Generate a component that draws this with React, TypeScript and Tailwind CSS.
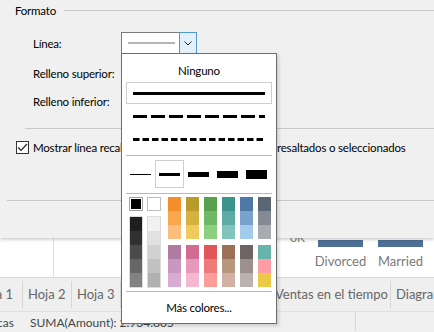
const topColors = [
  ["#f28e2b", "#f9a64e", "#fdbd7c"],
  ["#b89b2b", "#d6b13f", "#efcb5c"],
  ["#59a14f", "#6fb867", "#8ccf7e"],
  ["#3b948c", "#5caca5", "#80c4bd"],
  ["#4e79a7", "#78a2cd", "#a1caed"],
  ["#5b6675", "#838a93", "#a8acb0"],
];

const bottomColors = [
  ["#b07aa1", "#c997bf", "#d9aad3"],
  ["#d16b93", "#e699ba", "#f6b8d0"],
  ["#e15759", "#ef7a79", "#fe9c9a"],
  ["#9c7157", "#b9977f", "#d4b0a2"],
  ["#6f6462", "#9c8f8c", "#bbb1ae"],
  ["#69b3ad", "#ff9da7", "#edc948"],
];

const grays = ["#1f1f1f", "#303030", "#4b4b4b", "#666666", "#828282"];
const lights = ["#f1f1f1", "#e1e1e1", "#d1d1d1", "#c1c1c1", "#b1b1b1"];

const ColorColumn = ({ colors }: { colors: string[] }) => (
  <div className="flex w-[13px] flex-col">
    {colors.map((c) => (
      <div key={c} className="h-[14px] w-full" style={{ backgroundColor: c }} />
    ))}
  </div>
);

const LinePopup = () => {
  return (
    <div className="absolute left-[121px] top-[53px] flex h-[271px] w-[156px] flex-col border border-[#6e6e6e] bg-white text-[11.5px] tracking-[-0.2px] text-black shadow-[2px_2px_3px_rgba(0,0,0,0.15)]">
      <div className="flex h-[28px] items-center justify-center pt-[6px]">Ninguno</div>
      <div className="mx-[4px] flex h-[22px] items-center border border-[#cfcfcf] px-[6px]">
        <div className="h-[3px] w-full bg-black" />
      </div>
      <div className="flex h-[24px] items-center px-[11px]">
        <svg width="132" height="3">
          <line x1="0" y1="1.5" x2="132" y2="1.5" stroke="#000" strokeWidth="3" strokeDasharray="14 4" />
        </svg>
      </div>
      <div className="flex h-[22px] items-center px-[11px]">
        <svg width="132" height="3">
          <line x1="0" y1="1.5" x2="132" y2="1.5" stroke="#000" strokeWidth="3" strokeDasharray="6.5 3" />
        </svg>
      </div>
      <div className="mx-[4px] mt-[5px] h-px bg-[#b9b9b9]" />
      <div className="mx-[4px] mt-[4px] flex h-[28px]">
        {[1, 3, 5, 7, 9].map((w) => (
          <div
            key={w}
            className={
              w === 3
                ? "flex w-[29px] items-center justify-center border border-[#cfcfcf]"
                : "flex w-[29px] items-center justify-center"
            }
          >
            <div className="w-[21px] bg-black" style={{ height: w }} />
          </div>
        ))}
      </div>
      <div className="mx-[4px] mt-[5px] h-px bg-[#b9b9b9]" />
      <div className="mt-[3px] flex pl-[7px]">
        <div className="flex flex-col gap-[5px]">
          <div className="flex h-[14px] w-[14px] items-center justify-center border border-[#a0a0a0] bg-white">
            <div className="h-[10px] w-[10px] bg-black" />
          </div>
          <div className="flex w-[14px] flex-col border border-[#dcdcdc]">
            {grays.map((c) => (
              <div key={c} className="h-[14px] w-full" style={{ backgroundColor: c }} />
            ))}
          </div>
        </div>
        <div className="ml-[4px] flex flex-col gap-[5px]">
          <div className="h-[14px] w-[14px] border border-[#bdbdbd] bg-white" />
          <div className="flex w-[14px] flex-col border border-[#dcdcdc]">
            {lights.map((c) => (
              <div key={c} className="h-[14px] w-full" style={{ backgroundColor: c }} />
            ))}
          </div>
        </div>
        <div className="ml-[7px] flex flex-col gap-[6px]">
          <div className="flex gap-[5px]">
            {topColors.map((col) => (
              <ColorColumn key={col[0]} colors={col} />
            ))}
          </div>
          <div className="flex gap-[5px]">
            {bottomColors.map((col) => (
              <ColorColumn key={col[0]} colors={col} />
            ))}
          </div>
        </div>
      </div>
      <div className="mx-[4px] mt-[3px] h-px bg-[#b9b9b9]" />
      <div className="flex flex-1 items-center justify-center">Más colores...</div>
    </div>
  );
};

const FormatDialog = () => {
  return (
    <div className="relative h-[238px] bg-[#f0f0f0] text-[11.5px] tracking-[-0.2px] text-black shadow-[0_2px_3px_rgba(0,0,0,0.18)]">
      <div className="flex items-center pl-[15px] pt-[2px]">
        <span>Formato</span>
        <div className="ml-[8px] h-px flex-1 bg-[#c9c9c9]" />
      </div>
      <div className="mt-[13px] flex items-center pl-[33px]">
        <span className="w-[88px]">Línea:</span>
        <div className="flex h-[22px] w-[76px] border border-[#7a7a7a] bg-white">
          <div className="flex flex-1 items-center pl-[6px] pr-[4px]">
            <div className="h-[2px] w-full bg-[#b5b5b5]" />
          </div>
          <div className="-my-px -mr-px flex w-[18px] items-center justify-center border border-[#4c9ad4] bg-[#e3f0fb]">
            <svg width="8" height="5" viewBox="0 0 8 5">
              <path d="M0.5 0.5 L4 4 L7.5 0.5" fill="none" stroke="#222" strokeWidth="1" />
            </svg>
          </div>
        </div>
      </div>
      <div className="mt-[8px] flex h-[22px] items-center pl-[33px]">Relleno superior:</div>
      <div className="mt-[6px] flex h-[22px] items-center pl-[33px]">Relleno inferior:</div>
      <div className="ml-[25px] mt-[16px] h-px bg-[#c9c9c9]" />
      <div className="mt-[10px] flex items-center pl-[16px]">
        <div className="flex h-[13px] w-[13px] items-center justify-center border border-[#333] bg-white">
          <svg width="11" height="9" viewBox="0 0 11 9">
            <path d="M1 4.5 L4 7.5 L10 1" fill="none" stroke="#222" strokeWidth="1.2" />
          </svg>
        </div>
        <span className="ml-[4px] w-[244px] overflow-hidden whitespace-nowrap">Mostrar línea recalcada para elementos</span>
        <span className="whitespace-nowrap">resaltados o seleccionados</span>
      </div>
      <div className="ml-[7px] mt-[43px] h-px bg-[#c9c9c9]" />
    </div>
  );
};

const Worksheet = () => {
  return (
    <div className="flex h-[40px] overflow-hidden border-b border-[#d9d9d9] bg-white">
      <div className="w-[54px] border-r border-[#dedede]" />
      <div className="flex flex-1 pl-[236px]">
        <span className="-mt-[9px] w-[28px] text-[12px] text-[#777]">0K</span>
        <div className="flex gap-[15px]">
          <div className="flex w-[45px] flex-col items-center">
            <div className="mt-[2px] h-[7px] w-full bg-[#4e6f97]" />
            <span className="mt-[5px] text-[13px] text-[#7a7a7a]">Divorced</span>
          </div>
          <div className="flex w-[45px] flex-col items-center">
            <div className="mt-[2px] h-[7px] w-full bg-[#4e6f97]" />
            <span className="mt-[5px] text-[13px] text-[#7a7a7a]">Married</span>
          </div>
        </div>
      </div>
    </div>
  );
};

const SheetTabs = () => {
  return (
    <div className="flex h-[33px] items-stretch bg-[#efefef] text-[13px] text-[#666]">
      <div className="my-[3px] flex w-[23px] items-center justify-end overflow-hidden whitespace-nowrap border-r border-[#d6d6d6] pr-[9px]">Hoja 1</div>
      <div className="my-[3px] flex w-[49px] items-center whitespace-nowrap border-r border-[#d6d6d6] pl-[5px]">Hoja 2</div>
      <div className="my-[3px] flex w-[49px] items-center whitespace-nowrap border-r border-[#d6d6d6] pl-[5px]">Hoja 3</div>
      <div className="w-[148px]" />
      <div className="my-[3px] flex w-[122px] items-center whitespace-nowrap border-r border-[#d6d6d6] pl-[6px]">Ventas en el tiempo</div>
      <div className="flex flex-1 items-center overflow-hidden whitespace-nowrap pl-[5px]">Diagrama de dispersión</div>
    </div>
  );
};

const StatusBar = () => {
  return (
    <div className="flex h-[20px] items-center border-t border-[#e2e2e2] bg-[#f0f0f0] text-[12px] text-[#444]">
      <div className="flex w-[14px] justify-end overflow-hidden whitespace-nowrap pt-[2px]">4 marcas</div>
      <span className="ml-[16px] w-[325px] whitespace-nowrap pt-[2px]">SUMA(Amount): 2.934.805</span>
      <div className="h-full border-l border-[#d6d6d6]" />
    </div>
  );
};

export default function App() {
  return (
    <div className="relative h-[332px] w-[434px] overflow-hidden bg-[#f0f0f0]" style={{ fontFamily: "Lato, 'Noto Sans', sans-serif" }}>
      <FormatDialog />
      <Worksheet />
      <SheetTabs />
      <StatusBar />
      <LinePopup />
    </div>
  );
}
